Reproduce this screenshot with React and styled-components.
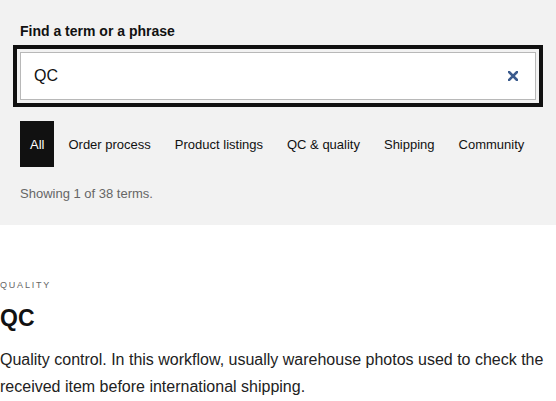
import React, {useState} from 'react';
import styled, {createGlobalStyle} from "styled-components";

const GlobalStyle = createGlobalStyle`
  html, body {
    margin: 0;
    padding: 0;
    background: #fff;
  }
  body {
    font-family: "Liberation Sans", Arial, sans-serif;
    color: #111;
  }
`;

const SearchPanel = styled.section`
  background: #f2f2f2;
  padding: 23px 20px 24px;
`;

const Label = styled.label`
  display: block;
  font-size: 14px;
  line-height: 16px;
  font-weight: 700;
  color: #111;
`;

const InputBox = styled.div`
  margin-top: 13px;
  height: 48px;
  box-sizing: border-box;
  display: flex;
  align-items: center;
  background: #fff;
  border: 1px solid #b8b8b8;
  outline: 4px solid #111;
  outline-offset: 3px;
`;

const Input = styled.input`
  flex: 1;
  min-width: 0;
  border: none;
  outline: none;
  background: transparent;
  padding: 0 13px;
  font-family: inherit;
  font-size: 16px;
  color: #111;
`;

const ClearButton = styled.button`
  display: flex;
  align-items: center;
  justify-content: center;
  width: 44px;
  height: 100%;
  padding: 0;
  border: none;
  background: transparent;
  color: #3b5b8d;
  cursor: pointer;
`;

const Chips = styled.div`
  margin-top: 21px;
  display: flex;
  gap: 4px;
`;

const Chip = styled.button`
  height: 46px;
  padding: 0 10px;
  border: none;
  font-family: inherit;
  font-size: 13px;
  cursor: pointer;
  background: ${props => props.$active ? '#111' : 'transparent'};
  color: ${props => props.$active ? '#fff' : '#111'};
`;

const Count = styled.p`
  margin: 19px 0 0;
  font-size: 13px;
  line-height: 15px;
  color: #666;
`;

const Entry = styled.article`
  padding-top: 55px;
`;

const Category = styled.div`
  font-size: 9px;
  line-height: 11px;
  letter-spacing: 1.8px;
  text-transform: uppercase;
  color: #666;
`;

const Term = styled.h2`
  margin: 14px 0 0;
  font-size: 23px;
  line-height: 27px;
  font-weight: 700;
  color: #111;
`;

const Definition = styled.p`
  margin: 14px 0 0;
  font-size: 16px;
  line-height: 27px;
  color: #222;
`;

const categories = ['All', 'Order process', 'Product listings', 'QC & quality', 'Shipping', 'Community'];

export default function App() {
    const [query, setQuery] = useState('QC');
    const [active, setActive] = useState('All');

    return (
        <>
            <GlobalStyle/>
            <SearchPanel>
                <Label htmlFor="term-search">Find a term or a phrase</Label>
                <InputBox>
                    <Input id="term-search" value={query} onChange={e => setQuery(e.target.value)}/>
                    <ClearButton aria-label="Clear" onClick={() => setQuery('')}>
                        <svg width="10" height="10" viewBox="0 0 10 10">
                            <path d="M1 1L9 9M9 1L1 9" stroke="currentColor" strokeWidth="2.6" strokeLinecap="square"/>
                        </svg>
                    </ClearButton>
                </InputBox>
                <Chips>
                    {categories.map(c => (
                        <Chip key={c} $active={c === active} onClick={() => setActive(c)}>{c}</Chip>
                    ))}
                </Chips>
                <Count>Showing 1 of 38 terms.</Count>
            </SearchPanel>
            <Entry>
                <Category>Quality</Category>
                <Term>QC</Term>
                <Definition>
                    Quality control. In this workflow, usually warehouse photos used to check the received item
                    before international shipping.
                </Definition>
            </Entry>
        </>
    );
}
